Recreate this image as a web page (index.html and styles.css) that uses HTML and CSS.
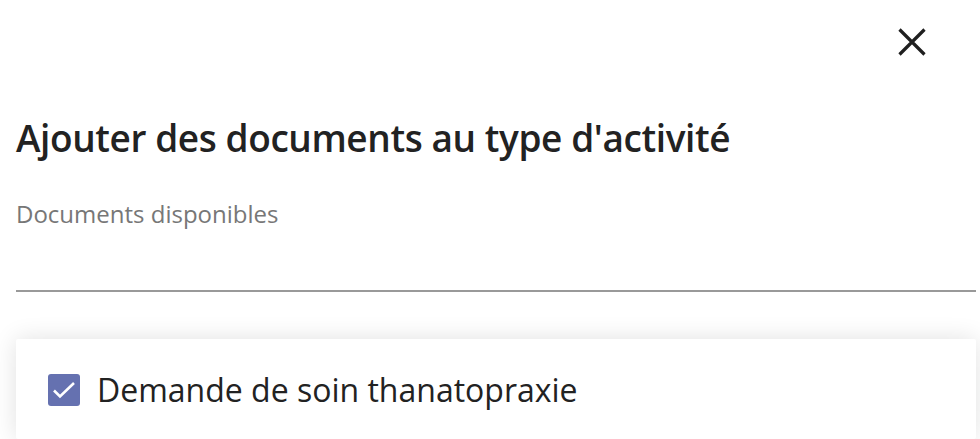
FILE: index.html
```html
<!DOCTYPE html>
<html lang="fr">
<head>
<meta charset="utf-8">
<link rel="stylesheet" href="styles.css">
</head>
<body>
<div class="dialog">
  <div class="topbar">
    <button class="close" aria-label="Fermer">
      <svg viewBox="0 0 28 28" width="28" height="28"><path d="M1.5 1.5 L26.5 26.5 M26.5 1.5 L1.5 26.5" stroke="#1f1f1f" stroke-width="3.2" fill="none"/></svg>
    </button>
  </div>
  <h1 class="title">Ajouter des documents au type d'activité</h1>
  <div class="field">
    <label class="field-label">Documents disponibles</label>
    <div class="field-input"></div>
  </div>
  <div class="list">
    <div class="option">
      <span class="checkbox">
        <svg viewBox="0 0 32 32" width="32" height="32"><path d="M6 16.5 L12 22.5 L26 9" stroke="#fff" stroke-width="2.6" fill="none"/></svg>
      </span>
      <span class="option-text">Demande de soin thanatopraxie</span>
    </div>
  </div>
</div>
</body>
</html>
```
FILE: styles.css
```css
html, body {
  margin: 0;
  padding: 0;
  background: #fff;
  font-family: "Open Sans", "Noto Sans", sans-serif;
  color: #222;
  overflow: hidden;
}
.dialog {
  padding: 0 4px 0 16px;
}
.topbar {
  display: flex;
  justify-content: flex-end;
  padding-top: 28px;
  padding-right: 50px;
}
.close {
  border: 0;
  background: none;
  padding: 0;
  width: 28px;
  height: 28px;
  display: flex;
}
.title {
  margin: 56px 0 0;
  font-size: 37px;
  font-weight: 600;
  line-height: 52px;
  letter-spacing: -0.4px;
  color: #222;
}
.field {
  margin-top: 34px;
}
.field-label {
  display: block;
  font-size: 24px;
  line-height: 32px;
  color: #777;
}
.field-input {
  height: 60px;
  border-bottom: 2px solid #999;
}
.list {
  margin-top: 47px;
  background: #fff;
  box-shadow: 0 0 24px rgba(0,0,0,0.12);
  border-radius: 2px;
  height: 100px;
}
.option {
  display: flex;
  align-items: center;
  gap: 17px;
  padding: 35px 32px;
}
.checkbox {
  width: 32px;
  height: 32px;
  border-radius: 3px;
  background: #6571b0;
  display: flex;
  align-items: center;
  justify-content: center;
}
.option-text {
  font-size: 32px;
  line-height: 32px;
  color: #222;
}
```
